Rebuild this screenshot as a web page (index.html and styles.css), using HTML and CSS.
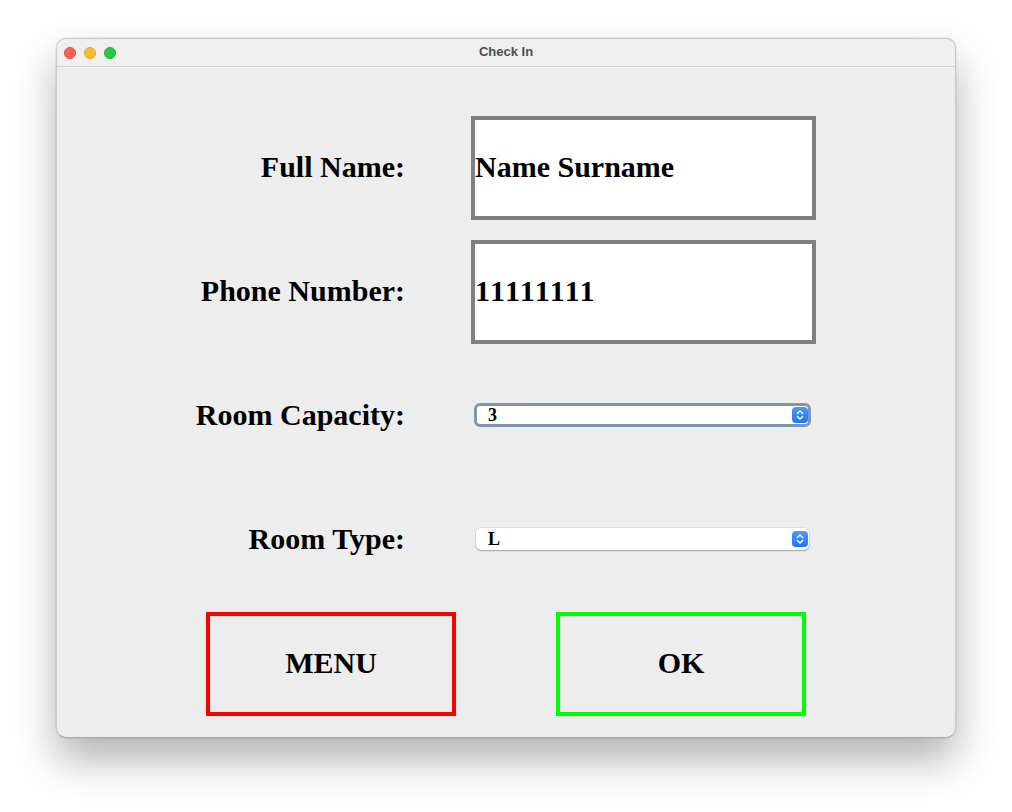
FILE: index.html
```html
<!DOCTYPE html>
<html>
<head>
<meta charset="utf-8">
<title>Check In</title>
<link rel="stylesheet" href="styles.css">
</head>
<body>
<div class="window">
  <div class="titlebar">
    <div class="lights">
      <span class="light red"></span>
      <span class="light yellow"></span>
      <span class="light green"></span>
    </div>
    <div class="title">Check In</div>
  </div>
  <div class="content">
    <div class="form">
      <div class="label">Full Name:</div>
      <div class="field">Name Surname</div>

      <div class="label">Phone Number:</div>
      <div class="field field-digits">11111111</div>

      <div class="label">Room Capacity:</div>
      <div class="combo combo-focus">
        <span class="combo-value">3</span>
        <svg class="combo-btn" width="16" height="16" viewBox="0 0 16 16">
          <defs>
            <linearGradient id="g1" x1="0" y1="0" x2="0" y2="1">
              <stop offset="0" stop-color="#4b9bff"/>
              <stop offset="1" stop-color="#1f74f0"/>
            </linearGradient>
          </defs>
          <rect x="0" y="0" width="16" height="16" rx="4" fill="url(#g1)"/>
          <path d="M5.3 6.6 L8 3.9 L10.7 6.6 M5.3 9.4 L8 12.1 L10.7 9.4" fill="none" stroke="#fff" stroke-width="1.4" stroke-linecap="round" stroke-linejoin="round"/>
        </svg>
      </div>

      <div class="label">Room Type:</div>
      <div class="combo combo-plain">
        <span class="combo-value">L</span>
        <svg class="combo-btn" width="16" height="16" viewBox="0 0 16 16">
          <defs>
            <linearGradient id="g2" x1="0" y1="0" x2="0" y2="1">
              <stop offset="0" stop-color="#4b9bff"/>
              <stop offset="1" stop-color="#1f74f0"/>
            </linearGradient>
          </defs>
          <rect x="0" y="0" width="16" height="16" rx="4" fill="url(#g2)"/>
          <path d="M5.3 6.6 L8 3.9 L10.7 6.6 M5.3 9.4 L8 12.1 L10.7 9.4" fill="none" stroke="#fff" stroke-width="1.4" stroke-linecap="round" stroke-linejoin="round"/>
        </svg>
      </div>
    </div>
    <div class="buttons">
      <div class="btn btn-menu">MENU</div>
      <div class="btn btn-ok">OK</div>
    </div>
  </div>
</div>
</body>
</html>
```

FILE: styles.css
```css
html, body {
  margin: 0;
  padding: 0;
  background: #ffffff;
}

body {
  padding: 38px 0 0 56px;
  width: 1012px;
  height: 812px;
  box-sizing: border-box;
  overflow: hidden;
}

.window {
  width: 900px;
  height: 700px;
  box-sizing: border-box;
  background: #ededed;
  border-radius: 10px;
  border: 1px solid #c9c9c9;
  border-bottom-color: #a9a9a9;
  box-shadow: 0 22px 42px rgba(0, 0, 0, 0.30), 0 0 0 0.5px rgba(0, 0, 0, 0.1);
  display: flex;
  flex-direction: column;
  overflow: hidden;
}

.titlebar {
  height: 27px;
  flex: none;
  background: #efefef;
  border-bottom: 1px solid #d3d3d3;
  display: flex;
  align-items: center;
  position: relative;
}

.lights {
  display: flex;
  gap: 8px;
  padding-left: 7px;
}

.light {
  width: 12px;
  height: 12px;
  border-radius: 50%;
  box-sizing: border-box;
}

.red { background: #ff5f57; border: 0.5px solid #e2463f; }
.yellow { background: #febc2e; border: 0.5px solid #e1a325; }
.green { background: #28c840; border: 0.5px solid #1dad2b; }

.title {
  position: absolute;
  left: 0;
  right: 0;
  top: 0;
  bottom: 0;
  display: flex;
  align-items: center;
  justify-content: center;
  font-family: "Liberation Sans", Arial, sans-serif;
  font-weight: bold;
  font-size: 13px;
  color: #4d4d4d;
  padding-bottom: 2px;
}

.content {
  flex: 1;
  padding-top: 49px;
  display: flex;
  flex-direction: column;
  gap: 20px;
}

.form {
  display: grid;
  grid-template-columns: 348px 345px;
  grid-template-rows: repeat(4, 104px);
  column-gap: 66px;
  row-gap: 20px;
}

.label {
  justify-self: end;
  align-self: center;
  font-family: "Liberation Serif", "Times New Roman", serif;
  font-weight: bold;
  font-size: 30px;
  color: #000;
  padding-bottom: 2px;
}

.field {
  box-sizing: border-box;
  border: 4px solid #808080;
  background: #fff;
  display: flex;
  align-items: center;
  font-family: "Liberation Serif", "Times New Roman", serif;
  font-weight: bold;
  font-size: 30px;
  color: #000;
  padding-bottom: 3px;
}

.field-digits {
  letter-spacing: 1.6px;
}

.combo {
  align-self: center;
  box-sizing: border-box;
  background: #fff;
  display: flex;
  align-items: center;
  font-family: "Liberation Serif", "Times New Roman", serif;
  font-weight: bold;
  font-size: 18px;
  color: #000;
}

.combo-focus {
  margin-left: 3px;
  width: 337px;
  height: 24px;
  margin-top: -2px;
  border: 3px solid #8196ae;
  border-radius: 6px;
  padding-left: 11px;
  padding-right: 0;
}

.combo-plain {
  margin-left: 5px;
  width: 333px;
  height: 22px;
  margin-top: -2px;
  border-radius: 5px;
  padding-left: 12px;
  padding-right: 1px;
  box-shadow: 0 0 0 0.5px rgba(0, 0, 0, 0.12), 0 1px 1.5px rgba(0, 0, 0, 0.28);
}

.combo-value {
  flex: 1;
}

.combo-btn {
  flex: none;
  display: block;
}

.buttons {
  display: flex;
  gap: 100px;
  padding-left: 149px;
}

.btn {
  width: 250px;
  height: 104px;
  box-sizing: border-box;
  border: 4px solid;
  display: flex;
  align-items: center;
  justify-content: center;
  font-family: "Liberation Serif", "Times New Roman", serif;
  font-weight: bold;
  font-size: 30px;
  color: #000;
  padding-bottom: 2px;
}

.btn-menu { border-color: #ff0000; }
.btn-ok { border-color: #00ff00; }
```
